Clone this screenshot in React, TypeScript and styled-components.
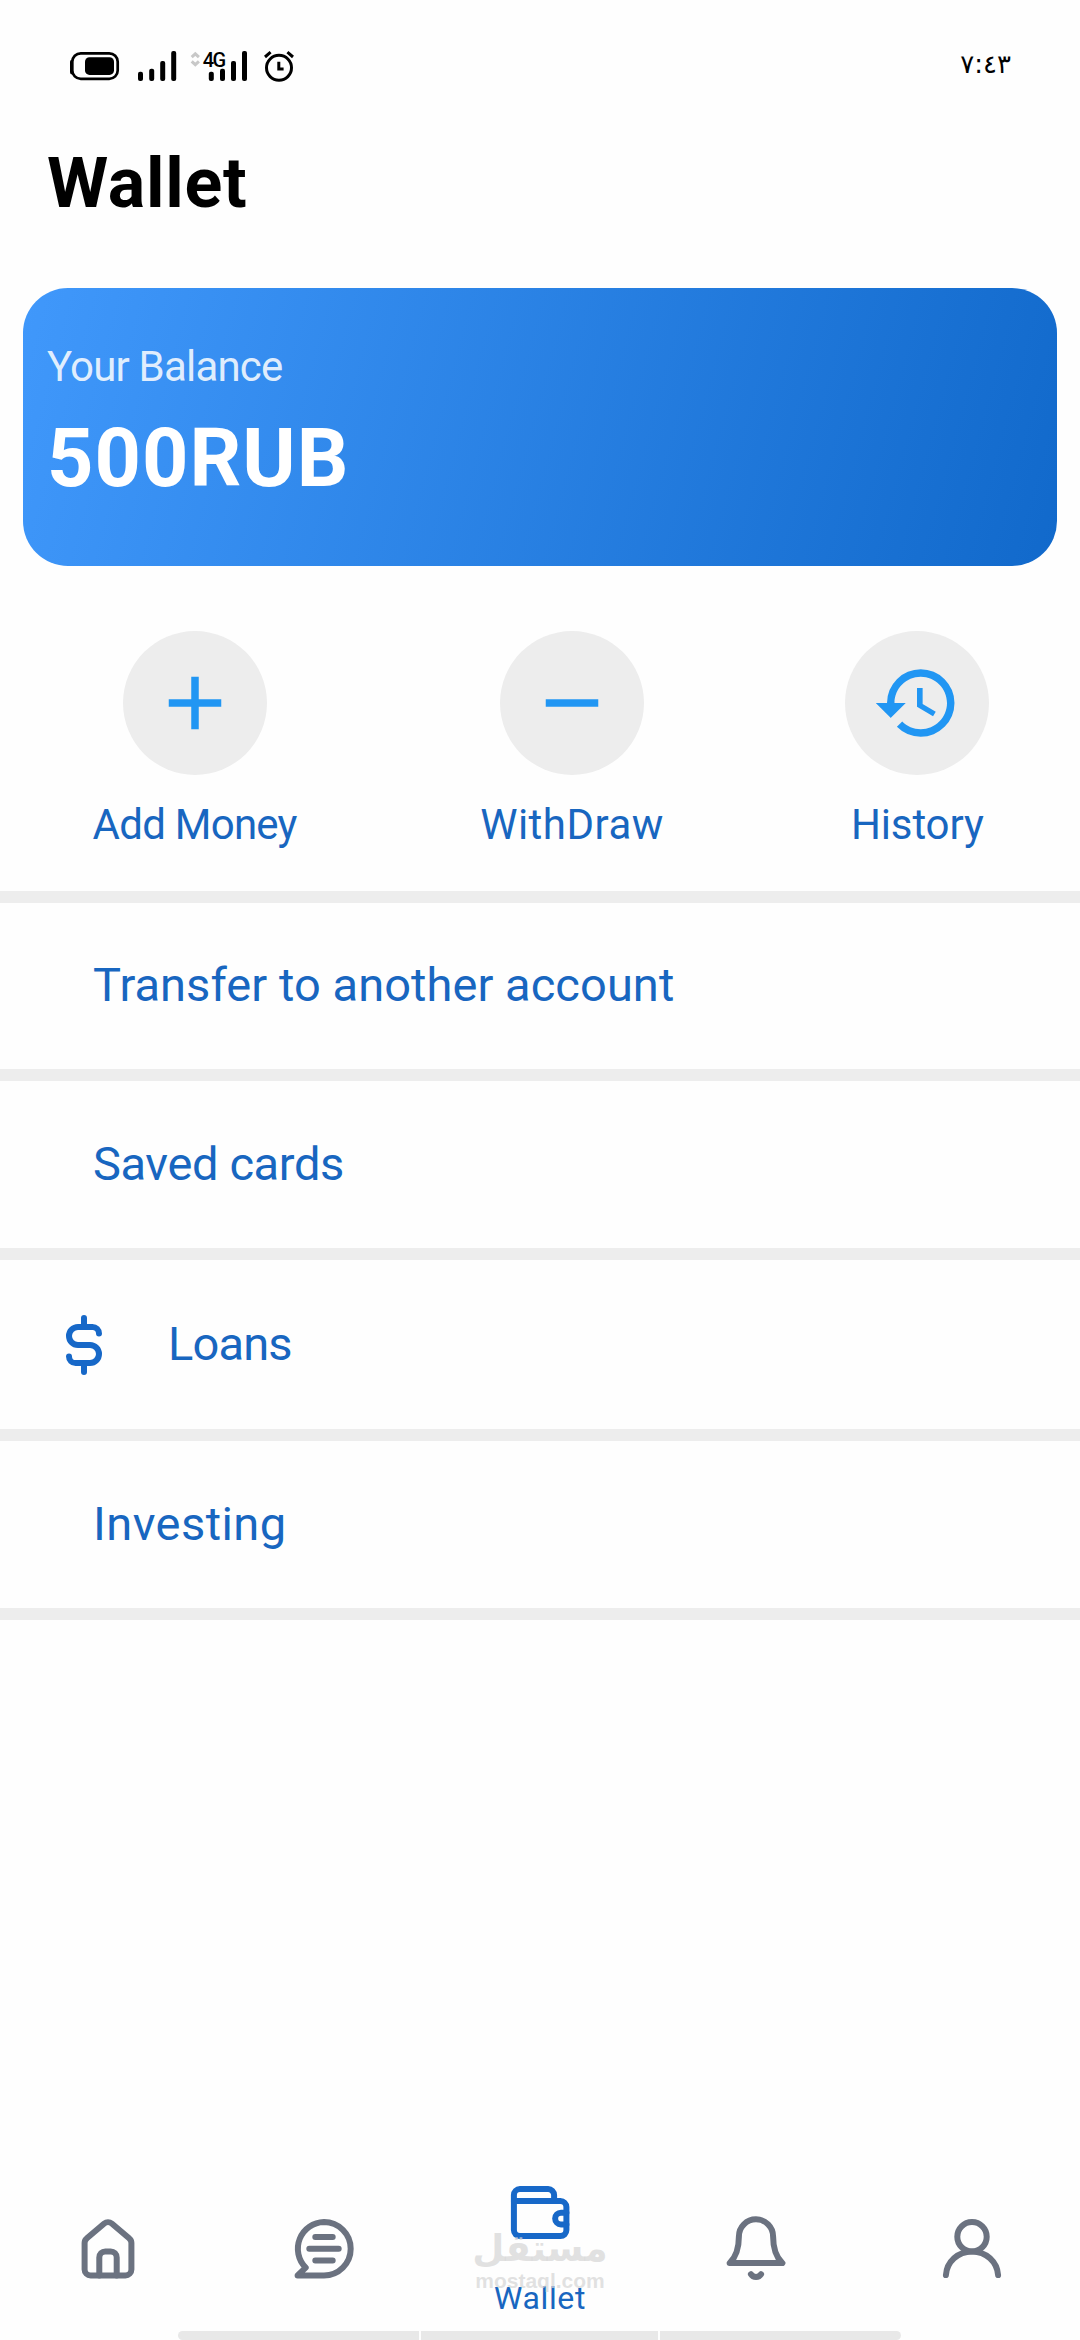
import React from 'react';
import styled, { createGlobalStyle } from 'styled-components';
import { MdAdd, MdHistory, MdRemove } from 'react-icons/md';

const blue = '#1866c0';
const accent = '#1768c8';
const muted = '#6b7280';
const line = '#ededed';

const GlobalStyle = createGlobalStyle`
  * { box-sizing: border-box; }
  body { margin: 0; background: #fefefe; }
`;

const Screen = styled.div`
  position: relative;
  width: 1080px;
  height: 2340px;
  display: flex;
  flex-direction: column;
  overflow: hidden;
  background: #fefefe;
  font-family: Roboto, "Liberation Sans", sans-serif;
`;

const StatusBar = styled.header`
  height: 143px;
  padding: 49px 69px 0 69px;
  display: flex;
  justify-content: space-between;
  align-items: flex-start;
`;

const StatusIcons = styled.div`
  display: flex;
  align-items: flex-start;
`;

const Glyph = styled.svg<{ $gap?: number }>`
  display: block;
  flex: none;
  margin-left: ${(p) => p.$gap ?? 0}px;
  overflow: visible;
`;

const Network = styled.div`
  display: flex;
  position: relative;
  margin-left: 14px;
`;

const NetworkLabel = styled.span`
  position: absolute;
  left: 12px;
  top: 1px;
  font: 500 20px/20px Roboto, sans-serif;
  letter-spacing: -1.5px;
  color: #000;
`;

const Clock = styled.time`
  direction: ltr;
  font: 26px/30px "DejaVu Sans", sans-serif;
  color: #000;
`;

const Title = styled.h1`
  margin: 0 0 65px 47px;
  font-size: 70px;
  line-height: 80px;
  font-weight: 700;
  letter-spacing: 0.7px;
  color: #000;
`;

const BalanceCard = styled.section`
  flex: none;
  height: 278px;
  margin: 0 23px;
  padding: 54px 24px 0;
  border-radius: 45px;
  background: linear-gradient(105deg, #4098fb 0%, #1169cb 100%);
`;

const BalanceLabel = styled.div`
  margin-bottom: 22px;
  font-size: 42px;
  line-height: 50px;
  letter-spacing: -0.81px;
  color: rgba(255, 255, 255, 0.85);
`;

const BalanceAmount = styled.div`
  font-size: 81px;
  line-height: 90px;
  font-weight: 700;
  letter-spacing: 1px;
  color: #fff;
`;

const Actions = styled.div`
  height: 325px;
  padding-top: 65px;
  display: flex;
  justify-content: space-around;
`;

const Action = styled.button<{ $width: number }>`
  width: ${(p) => p.$width}px;
  display: flex;
  flex-direction: column;
  align-items: center;
  gap: 25px;
  padding: 0;
  border: 0;
  background: none;
  font-family: inherit;
`;

const ActionCircle = styled.span`
  width: 144px;
  height: 144px;
  display: grid;
  place-items: center;
  border-radius: 50%;
  background: ${line};
  color: #2196f3;
  font-size: 90px;

  svg { display: block; }
`;

const ActionLabel = styled.span<{ $tracking: number }>`
  font-size: 42px;
  line-height: 50px;
  letter-spacing: ${(p) => p.$tracking}px;
  white-space: nowrap;
  color: ${blue};
`;

const Menu = styled.ul`
  margin: 0;
  padding: 0;
  list-style: none;
  border-top: 12px solid ${line};
`;

const MenuRow = styled.li<{ $height: number; $indent: number }>`
  height: ${(p) => p.$height}px;
  padding-left: ${(p) => p.$indent}px;
  display: flex;
  align-items: center;
  gap: 48px;
  border-bottom: 12px solid ${line};
`;

const MenuLabel = styled.span<{ $tracking: number }>`
  padding-bottom: 2px;
  font-size: 47px;
  line-height: 56px;
  letter-spacing: ${(p) => p.$tracking}px;
  color: ${blue};
`;

const NavBar = styled.nav`
  position: relative;
  height: 154px;
  margin-top: auto;
  padding-bottom: 10px;
  display: grid;
  grid-template-columns: repeat(5, 1fr);
`;

const NavItem = styled.a<{ $active?: boolean }>`
  display: flex;
  flex-direction: column;
  align-items: center;
  justify-content: ${(p) => (p.$active ? 'flex-start' : 'center')};
  gap: 30px;
  color: ${(p) => (p.$active ? accent : muted)};
`;

const NavLabel = styled.span`
  font-size: 32px;
  line-height: 38px;
  letter-spacing: 0.64px;
  color: ${blue};
`;

const Watermark = styled.div`
  position: absolute;
  left: 440px;
  top: 48px;
  width: 200px;
  display: flex;
  flex-direction: column;
  align-items: center;
  color: rgba(214, 214, 214, 0.72);
  pointer-events: none;
`;

const WatermarkName = styled.span`
  font: bold 37px/48px "DejaVu Sans", sans-serif;
`;

const WatermarkSite = styled.span`
  margin-top: -5px;
  font: bold 21px/26px "Liberation Sans", sans-serif;
`;

const GestureBar = styled.div`
  height: 9px;
  margin: 0 179px 0 178px;
  display: grid;
  grid-template-columns: 241px 237px 241px;
  gap: 2px;
`;

const GestureSegment = styled.span<{ $radius: string }>`
  background: #e8e8e8;
  border-radius: ${(p) => p.$radius};
`;

const Battery = () => (
  <Glyph width="50" height="34" viewBox="0 0 50 34">
    <path d="M3.5 13v10" stroke="#000" strokeWidth="5" strokeLinecap="round" />
    <rect x="3.3" y="4.3" width="45.4" height="25.6" rx="8.5" fill="#fefefe" stroke="#000" strokeWidth="2.7" />
    <rect x="16" y="8.3" width="29" height="17.6" rx="4.5" fill="#000" />
  </Glyph>
);

const bars = [
  { x: 0, top: 22.7 },
  { x: 11.2, top: 19.7 },
  { x: 22.2, top: 12 },
  { x: 33.2, top: 2 },
];

const SignalBars = ({ x = 0 }: { x?: number }) => (
  <>
    {bars.map((b) => (
      <rect key={b.x} x={x + b.x} y={b.top} width="5" height={32 - b.top} rx="2" fill="#000" />
    ))}
  </>
);

const AlarmClock = () => (
  <Glyph width="30" height="34" viewBox="0 0 30 34" $gap={17} fill="none" stroke="#000" strokeWidth="3">
    <circle cx="15" cy="18.8" r="12.5" />
    <path d="M14.8 12.7v7.4h4.8M1 8l5.6-4.8M29 8l-5.6-4.8" />
  </Glyph>
);

const LineIcon = ({ children }: { children: React.ReactNode }) => (
  <Glyph
    width="72"
    height="72"
    viewBox="0 0 24 24"
    fill="none"
    stroke="currentColor"
    strokeWidth="2"
    strokeLinecap="round"
    strokeLinejoin="round"
  >
    {children}
  </Glyph>
);

const DollarColor = styled.span`
  color: ${accent};
`;

const DollarIcon = () => (
  <DollarColor>
    <LineIcon>
      <path d="M12 3v3M12 18v3M17 8.2A2.2 2.2 0 0 0 14.8 6H10a3 3 0 0 0 0 6h4a3 3 0 0 1 0 6H9.2A2.2 2.2 0 0 1 7 15.8" />
    </LineIcon>
  </DollarColor>
);

const HomeIcon = () => (
  <LineIcon>
    <path d="M4.2 10a2 2 0 0 1 .75-1.56l5.8-4.95a2 2 0 0 1 2.5 0l5.8 4.95A2 2 0 0 1 19.8 10v8.8a2 2 0 0 1-2 2H6.2a2 2 0 0 1-2-2z" />
    <path d="M9.1 20.8v-6a2 2 0 0 1 2-2h1.8a2 2 0 0 1 2 2v6" />
  </LineIcon>
);

const ChatIcon = () => (
  <LineIcon>
    <path d="M12 3a8.9 8.9 0 0 1 0 17.8H3.2l2.7-2.6A8.9 8.9 0 0 1 12 3z" />
    <path d="M9.1 8h5.8M7.1 11.9h9.8M9.1 15.8h5.8" />
  </LineIcon>
);

const WalletIcon = () => (
  <LineIcon>
    <path d="M3.3 8V6a2 2 0 0 1 2-2h9.4a2 2 0 0 1 2 2v2" />
    <path d="M3.3 8h15.5a2 2 0 0 1 2 2v7.7a2 2 0 0 1-2 2H5.3a2 2 0 0 1-2-2z" />
    <path d="M20.8 11.9H19a1.95 1.95 0 0 0 0 3.9h1.8" />
  </LineIcon>
);

const BellIcon = () => (
  <LineIcon>
    <path d="M6.3 7.8a5.7 5.7 0 0 1 11.4 0c0 4 .8 6.7 3.1 8.9H3.2c2.3-2.2 3.1-4.9 3.1-8.9z" />
    <path d="M10.3 20.4a2 2 0 0 0 3.4 0" />
  </LineIcon>
);

const PersonIcon = () => (
  <LineIcon>
    <circle cx="12" cy="7.9" r="4.9" />
    <path d="M3.3 20.7C3.6 16.2 7.3 12.8 12 12.8s8.4 3.4 8.7 7.9" />
  </LineIcon>
);

const actions = [
  { label: 'Add Money', tracking: -0.75, width: 208, icon: <MdAdd /> },
  { label: 'WithDraw', tracking: 0.49, width: 184, icon: <MdRemove /> },
  { label: 'History', tracking: -0.12, width: 144, icon: <MdHistory /> },
];

const menu = [
  { label: 'Transfer to another account', tracking: 0.06, height: 178, indent: 93 },
  { label: 'Saved cards', tracking: -0.38, height: 179, indent: 93 },
  { label: 'Loans', tracking: -0.83, height: 181, indent: 48, icon: <DollarIcon /> },
  { label: 'Investing', tracking: 0.45, height: 179, indent: 93 },
];

export default function App() {
  return (
    <Screen>
      <GlobalStyle />
      <StatusBar>
        <StatusIcons>
          <Battery />
          <Glyph width="39" height="34" viewBox="0 0 39 34" $gap={18.7}>
            <SignalBars />
          </Glyph>
          <Network>
            <Glyph width="56" height="34" viewBox="0 0 56 34">
              <path
                d="M0.7 8.2L4.3 4.8L7.900 8.200M0.700 12.300L4.300 15.700L7.900 12.300"
                fill="none"
                stroke="#c8c8c8"
                strokeWidth="3"
              />
              <SignalBars x={17.8} />
            </Glyph>
            <NetworkLabel>4G</NetworkLabel>
          </Network>
          <AlarmClock />
        </StatusIcons>
        <Clock>٧:٤٣</Clock>
      </StatusBar>

      <Title>Wallet</Title>

      <BalanceCard>
        <BalanceLabel>Your Balance</BalanceLabel>
        <BalanceAmount>500RUB</BalanceAmount>
      </BalanceCard>

      <Actions>
        {actions.map((a) => (
          <Action key={a.label} $width={a.width}>
            <ActionCircle>{a.icon}</ActionCircle>
            <ActionLabel $tracking={a.tracking}>{a.label}</ActionLabel>
          </Action>
        ))}
      </Actions>

      <Menu>
        {menu.map((m) => (
          <MenuRow key={m.label} $height={m.height} $indent={m.indent}>
            {m.icon}
            <MenuLabel $tracking={m.tracking}>{m.label}</MenuLabel>
          </MenuRow>
        ))}
      </Menu>

      <NavBar>
        <NavItem><HomeIcon /></NavItem>
        <NavItem><ChatIcon /></NavItem>
        <NavItem $active>
          <WalletIcon />
          <NavLabel>Wallet</NavLabel>
        </NavItem>
        <NavItem><BellIcon /></NavItem>
        <NavItem><PersonIcon /></NavItem>
        <Watermark>
          <WatermarkName>مستقل</WatermarkName>
          <WatermarkSite>mostaql.com</WatermarkSite>
        </Watermark>
      </NavBar>
      <GestureBar>
        <GestureSegment $radius="6px 0 0 6px" />
        <GestureSegment $radius="0" />
        <GestureSegment $radius="0 6px 6px 0" />
      </GestureBar>
    </Screen>
  );
}
